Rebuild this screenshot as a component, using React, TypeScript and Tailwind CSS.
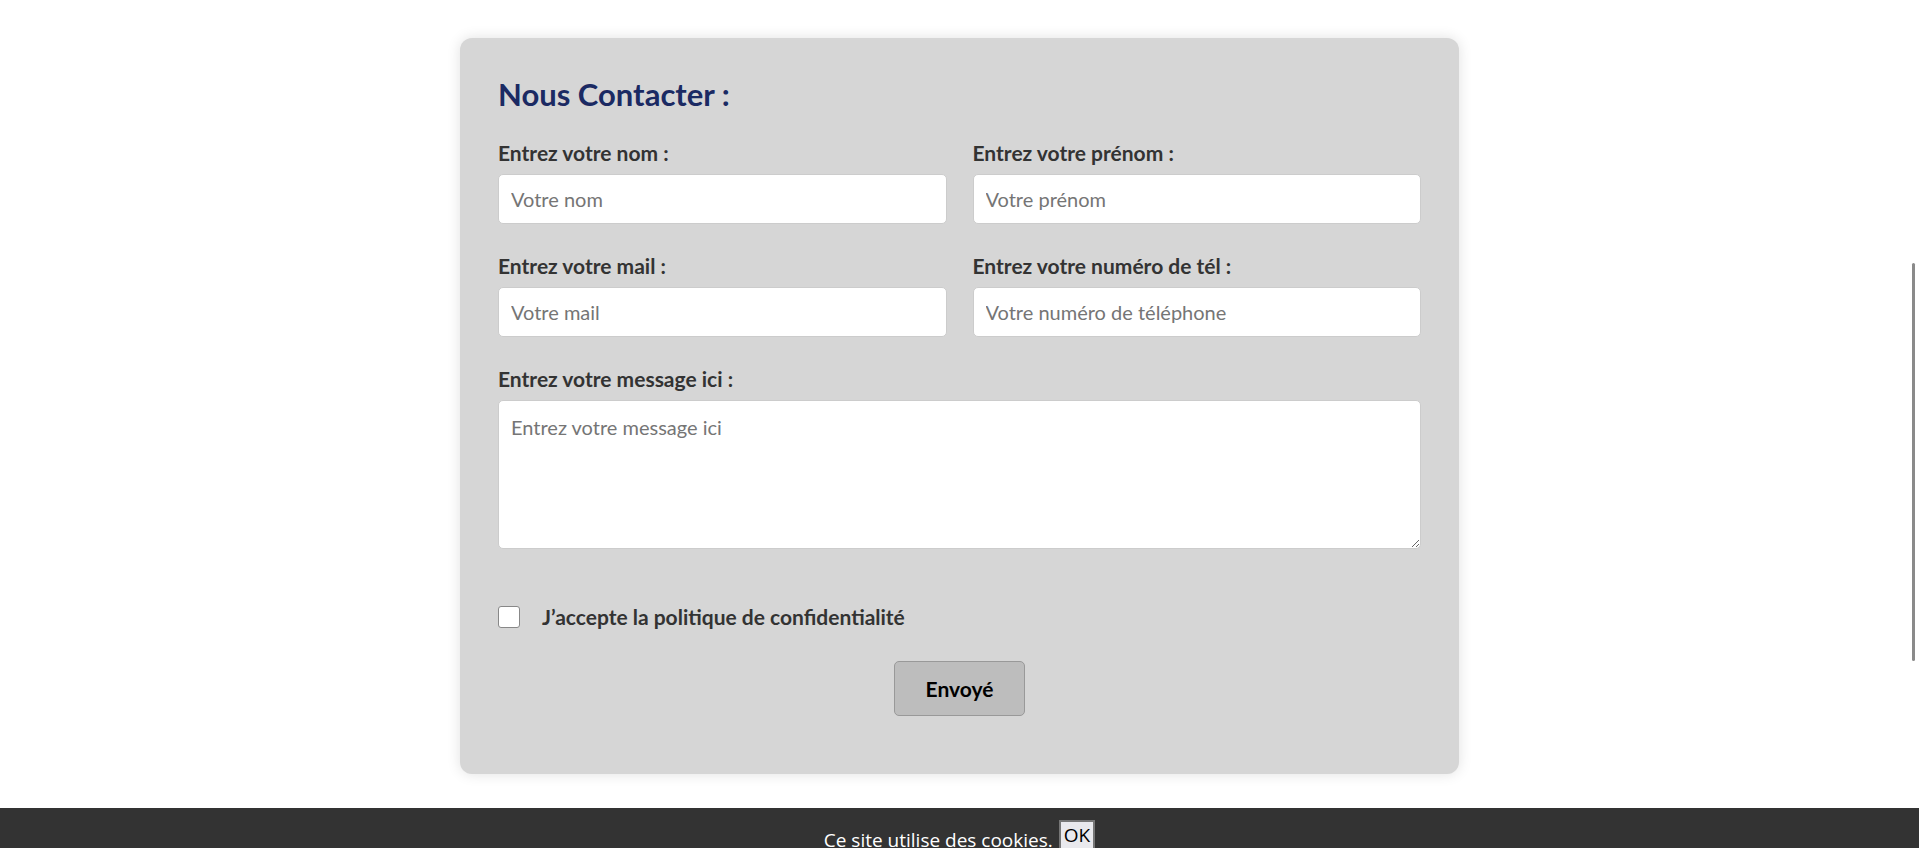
import React from "react";

const labelCls = "block text-[21px] leading-[22px] font-bold text-[#333333] mb-[10px]";
const inputCls =
    "w-full h-[50px] bg-white border border-[#cccccc] rounded-[5px] px-[12px] text-[20px] text-[#333] placeholder:text-[#757575] outline-none";

type FieldProps = {
    label: string;
    placeholder: string;
};

const Field = ({label, placeholder}: FieldProps) => (
    <div className="flex flex-col">
        <label className={labelCls}>{label}</label>
        <input className={inputCls} placeholder={placeholder}/>
    </div>
);

export default function App() {
    return (
        <div
            className="relative h-[848px] overflow-hidden bg-white flex flex-col items-center pt-[38px]"
            style={{fontFamily: "Lato, 'Open Sans', sans-serif"}}
        >
            <form className="w-[999px] bg-[#d6d6d6] rounded-[12px] shadow-[0_0_14px_rgba(0,0,0,0.12)] px-[38px] pt-[39px] pb-[58px]">
                <h2 className="text-[31px] leading-[34px] font-bold text-[#1b2a63] mb-[31px]">Nous Contacter :</h2>

                <div className="grid grid-cols-2 gap-x-[26px] gap-y-[31px]">
                    <Field label="Entrez votre nom :" placeholder="Votre nom"/>
                    <Field label="Entrez votre prénom :" placeholder="Votre prénom"/>
                    <Field label="Entrez votre mail :" placeholder="Votre mail"/>
                    <Field label="Entrez votre numéro de tél :" placeholder="Votre numéro de téléphone"/>
                    <div className="col-span-2 flex flex-col">
                        <label className={labelCls}>Entrez votre message ici :</label>
                        <textarea
                            className="w-full h-[149px] bg-white border border-[#cccccc] rounded-[5px] px-[12px] pt-[11px] pb-[12px] text-[20px] text-[#333] placeholder:text-[#757575] outline-none"
                            placeholder="Entrez votre message ici"
                        />
                    </div>
                </div>

                <div className="flex items-center gap-[22px] mt-[57px] h-[22px]">
                    <span className="w-[22px] h-[22px] bg-white border border-[#888] rounded-[3px]"/>
                    <span className="text-[21px] leading-[22px] font-bold text-[#333333]">J’accepte la politique de confidentialité</span>
                </div>

                <div className="flex justify-center mt-[33px]">
                    <button
                        type="button"
                        className="w-[131px] h-[55px] bg-[#bdbdbd] border border-[#999999] rounded-[5px] text-[21px] font-bold text-black"
                    >
                        Envoyé
                    </button>
                </div>
            </form>

            <div className="mt-[34px] w-full h-[60px] bg-[#333333] flex justify-center items-start pt-[12px] gap-[6px]">
                <span className="text-white text-[19px] leading-[28px] mt-[6px]" style={{fontFamily: "'Open Sans', sans-serif"}}>
                    Ce site utilise des cookies.
                </span>
                <button
                    type="button"
                    className="bg-[#e9e9ed] border-2 border-[#767676] text-black text-[19px] leading-[26px] px-[3px]"
                    style={{fontFamily: "'Open Sans', sans-serif"}}
                >
                    OK
                </button>
            </div>

            <div className="absolute right-[4px] top-[263px] w-[3px] h-[398px] bg-[#8a8a8a] rounded-full"/>
        </div>
    );
}
